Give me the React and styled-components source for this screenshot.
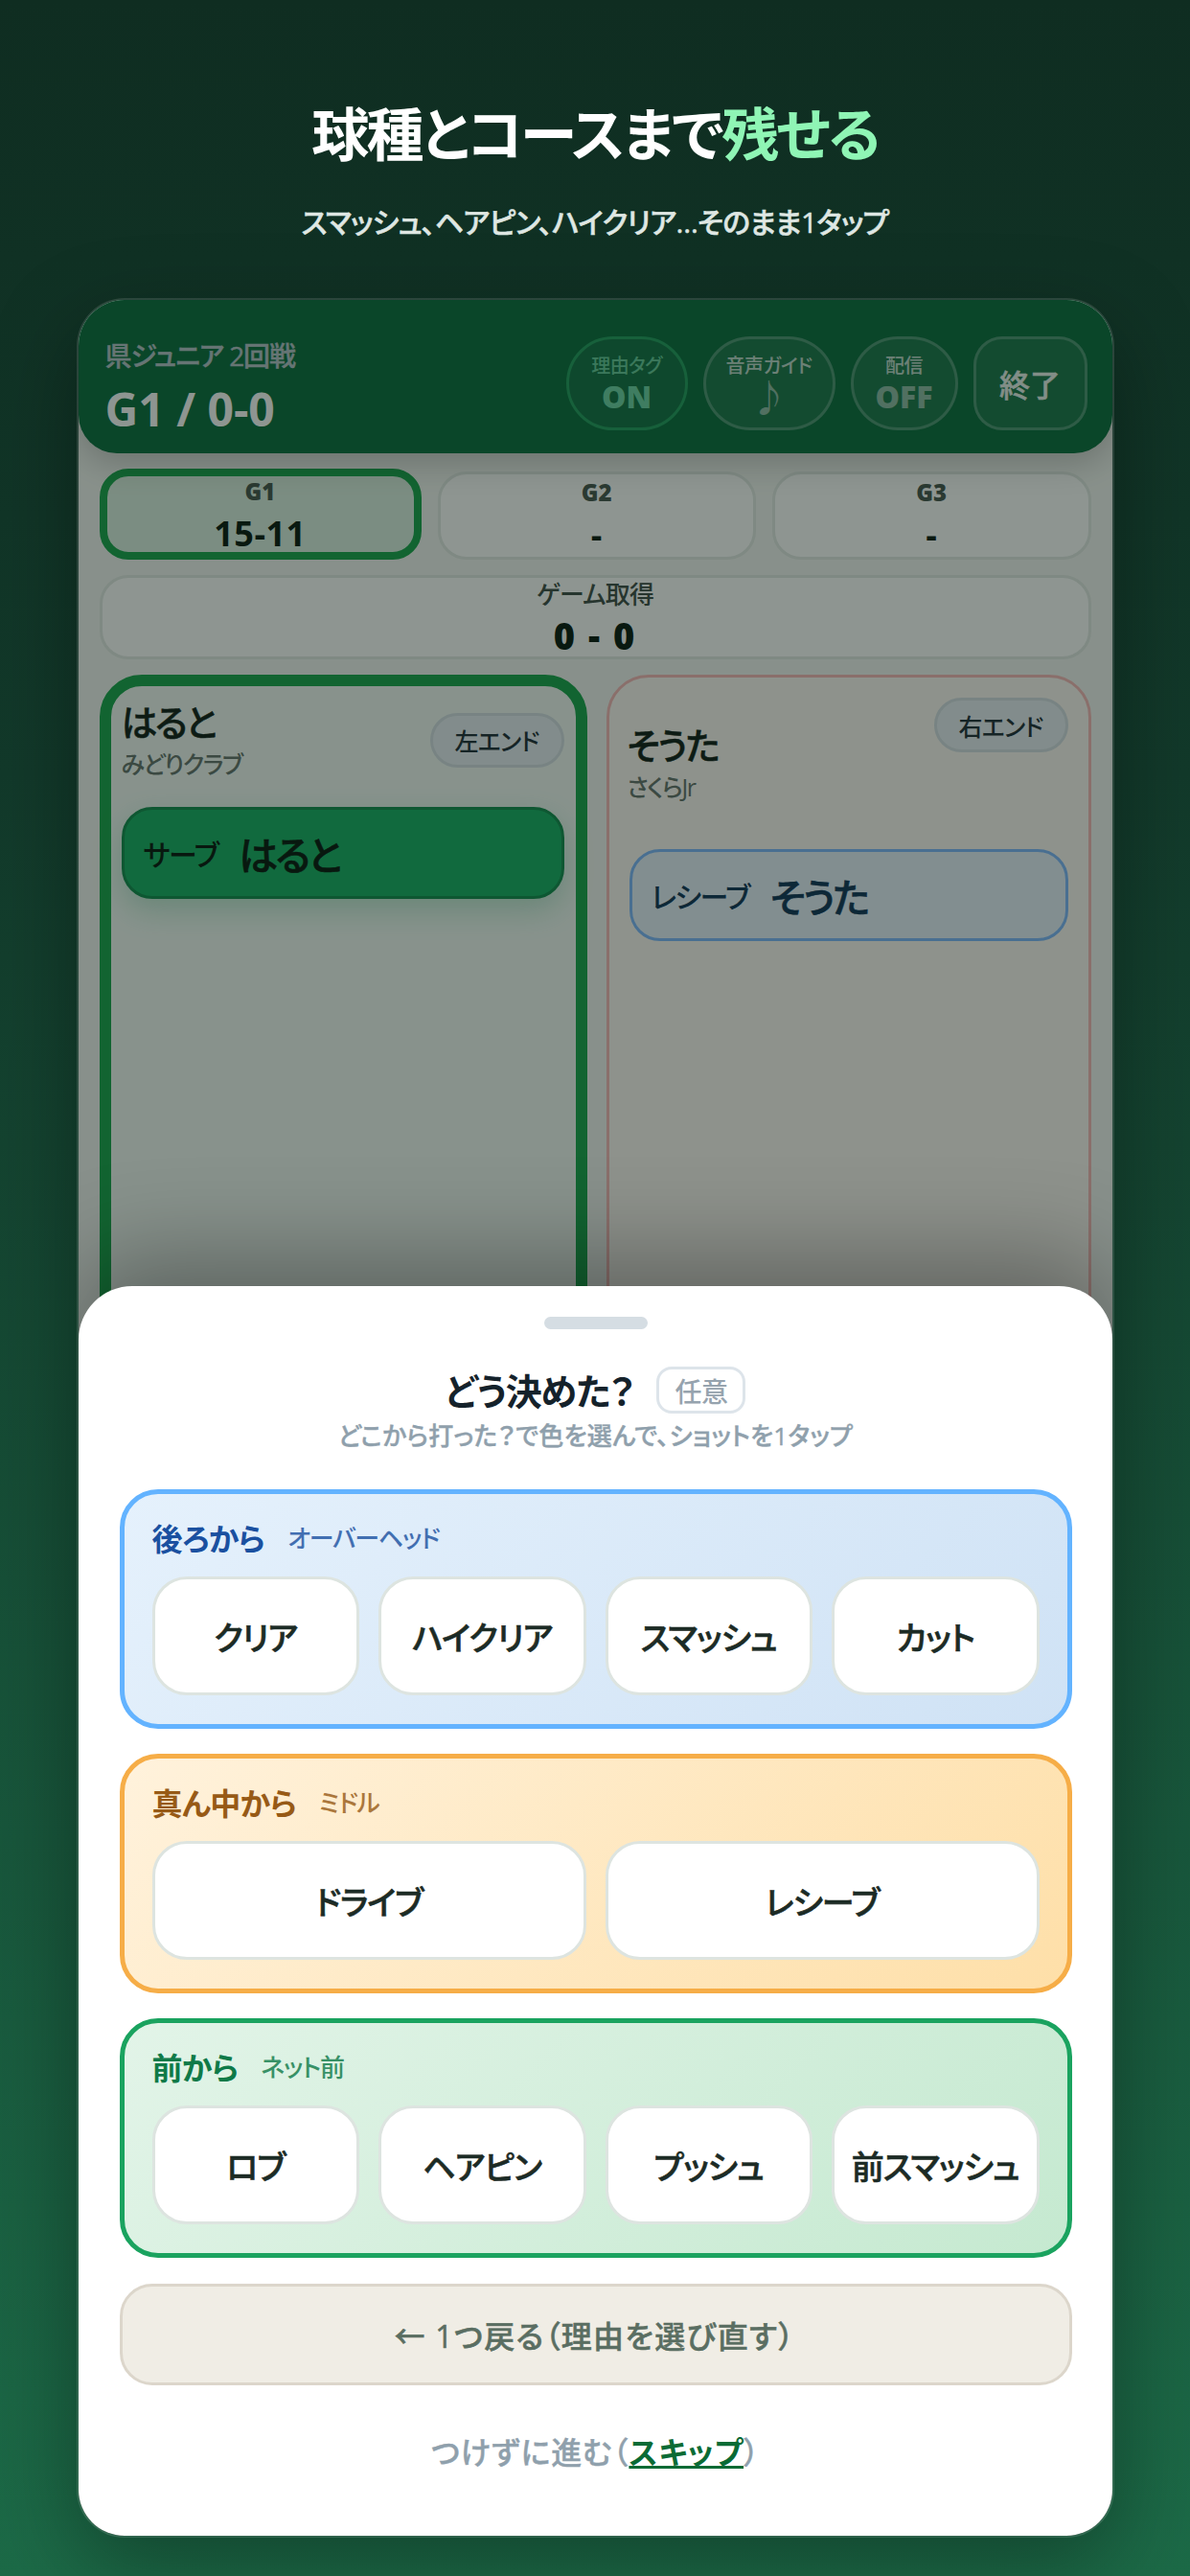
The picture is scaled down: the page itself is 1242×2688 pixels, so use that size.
import React from "react";
import styled, { createGlobalStyle } from "styled-components";

const FONT = `"Open Sans", "Noto Sans CJK JP", "Noto Sans", sans-serif`;

const Global = createGlobalStyle`
  html, body { margin: 0; padding: 0; }
  body { font-family: ${FONT}; font-feature-settings: "palt"; }
  * { box-sizing: border-box; }
`;
const Page = styled.div`
  width: 1242px; height: 2688px; overflow: hidden;
  background: linear-gradient(180deg, #0f2d21 0%, #12392a 30%, #1c6a47 100%);
  display: flex; flex-direction: column; align-items: center; padding-top: 98px;
`;
const Headline = styled.h1`
  margin: 0; font-size: 60px; line-height: 84px; font-weight: 700; color: #fff; letter-spacing: -2.6px;
`;
const Accent = styled.span` color: #8ff5b5; `;
const Lead = styled.p`
  margin: 28px 0 0; font-size: 30px; line-height: 44px; font-weight: 500; color: #dfe7e3; letter-spacing: -.8px;
  -webkit-text-stroke: 0.5px #dfe7e3;
`;
const Phone = styled.div`
  position: relative; margin-top: 59px; width: 1079px; height: 2333px; flex: none;
  border-radius: 48px; overflow: hidden; background: #f4f6f3;
  box-shadow: 0 0 0 2px rgba(255,255,255,.12), 0 30px 90px rgba(0,0,0,.35);
`;
const Top = styled.header`
  position: relative; height: 160px; padding: 14px 26px 0 28px; display: flex; align-items: center; justify-content: space-between;
  background: #076a3c; border-radius: 0 0 40px 40px; color: #fff;
  box-shadow: 0 10px 34px rgba(0,0,0,.22);
`;
const Match = styled.div` padding-top: 6px; `;
const Tourney = styled.div` font-size: 28px; line-height: 40px; font-weight: 500; color: #b4c2c8; letter-spacing: -1.1px; -webkit-text-stroke: .4px #b4c2c8; `;
const Score = styled.div` margin-top: 8px; font-size: 48px; line-height: 56px; font-weight: 700; `;
const Controls = styled.div` display: flex; align-items: center; gap: 16px; `;
const Ctl = styled.div`
  height: 98px; width: ${p => p.$w}px; border-radius: ${p => p.$square ? 30 : 49}px;
  display: flex; flex-direction: column; align-items: center; justify-content: center;
  border: 3px solid ${p => p.$on ? "#1f9c5d" : "rgba(255,255,255,.22)"};
  background: rgba(255,255,255,${p => p.$on ? .03 : .07});
  color: ${p => p.$on ? "#83ecbd" : "#fff"};
`;
const CtlLabel = styled.span` font-size: 20px; line-height: 28px; font-weight: 500; opacity: .72; letter-spacing: -.5px; `;
const CtlValue = styled.span` font-size: 32px; line-height: 36px; font-weight: 800; opacity: ${p => p.$dim ? .5 : .8}; `;
const CtlNote = styled.span` font-size: 38px; line-height: 36px; font-weight: 400; opacity: .5; `;
const CtlEnd = styled.span` font-size: 32px; font-weight: 500; opacity: .9; -webkit-text-stroke: .5px #fff; `;
const Body = styled.main` padding: 16px 22px 0 22px; display: flex; flex-direction: column; `;
const Games = styled.div` display: grid; grid-template-columns: 336px 1fr 1fr; gap: 17px; align-items: end; `;
const Game = styled.div`
  height: ${p => p.$active ? 95 : 92}px; border-radius: 30px; padding-top: 2px;
  border: ${p => p.$active ? "8px solid #16a34a" : "3px solid #e2e8e4"};
  background: ${p => p.$active ? "#dcf0e2" : "#fff"};
  display: flex; flex-direction: column; align-items: center; justify-content: center;
`;
const GameLabel = styled.div` font-size: 24px; line-height: 30px; font-weight: 800; color: #44534c; `;
const GameScore = styled.div` font-size: 36px; line-height: 42px; font-weight: 700; margin-top: 8px; letter-spacing: .5px; color: #05150d; `;
const Tally = styled.div`
  margin-top: 16px; height: 88px; border-radius: 30px; border: 3px solid #e2e8e4; background: #fff;
  display: flex; flex-direction: column; align-items: center; justify-content: center;
`;
const TallyLabel = styled.div` font-size: 26px; line-height: 34px; font-weight: 500; color: #3c4a44; letter-spacing: -.8px; `;
const TallyScore = styled.div` font-size: 38px; line-height: 46px; font-weight: 800; margin-top: 3px; color: #05150d; letter-spacing: 2px; `;
const Players = styled.div` margin-top: 16px; display: grid; grid-template-columns: 509px 506px; gap: 20px; `;
const Player = styled.section`
  height: 1500px; border-radius: 44px;
  border: ${p => p.$active ? "12px solid #16a34a" : "3px solid #f7b8b8"};
  padding: ${p => p.$active ? "12px 12px 12px 11px" : "21px 21px 21px 19px"}; background: ${p => p.$active ? "#f3faf6" : "#fff9f5"};
`;
const PlayerTop = styled.div`
  display: flex; justify-content: space-between; align-items: ${p => p.$active ? "center" : "flex-start"};
`;
const Who = styled.div` padding-top: ${p => p.$active ? 0 : 24}px; `;
const Name = styled.div` font-size: 38px; line-height: 50px; font-weight: 500; color: #0c1a14; letter-spacing: -2.6px; -webkit-text-stroke: .5px #0c1a14; `;
const Club = styled.div` font-size: 25px; line-height: 38px; font-weight: 500; color: #62706a; letter-spacing: -1.4px; `;
const EndPill = styled.div`
  width: 140px; height: 57px; border-radius: 29px; border: 3px solid #d5dee4; background: #e9eff5;
  display: flex; align-items: center; justify-content: center; font-size: 25px; font-weight: 500; color: #1c2b35; letter-spacing: -.8px;
`;
const Role = styled.div`
  margin: ${p => p.$active ? "26px 0 0" : "46px 0 0 2px"}; height: 96px; border-radius: 32px; padding: 0 20px;
  display: flex; align-items: center; gap: 22px;
  background: ${p => p.$active ? "#14af63" : "#e8f1fd"};
  border: 3px solid ${p => p.$active ? "#0f8a4c" : "#7db8ff"};
  color: ${p => p.$active ? "#03130b" : "#0d3256"};
  box-shadow: ${p => p.$active ? "0 12px 30px rgba(21,163,94,.25)" : "none"};
`;
const RoleTag = styled.span` font-size: 30px; font-weight: 500; letter-spacing: -1.5px; `;
const RoleName = styled.span` font-size: 41px; font-weight: 500; letter-spacing: -3px; -webkit-text-stroke: .6px currentColor; `;
const Scrim = styled.div` position: absolute; inset: 0; background: rgba(15,30,22,.47); `;
const Sheet = styled.div`
  position: absolute; left: 0; right: 0; bottom: 0; height: 1304px;
  background: #fff; border-radius: 56px 56px 48px 48px;
  box-shadow: 0 -30px 100px rgba(0,0,0,.32);
  padding: 32px 42px 0 43px; display: flex; flex-direction: column;
`;
const Handle = styled.div` align-self: center; width: 108px; height: 13px; border-radius: 7px; background: #d5dde3; `;
const TitleRow = styled.div` margin-top: 39px; height: 49px; display: flex; justify-content: center; align-items: center; gap: 24px; `;
const Title = styled.h2` margin: 0; font-size: 38px; line-height: 50px; font-weight: 700; color: #15222b; letter-spacing: -1.2px; `;
const Badge = styled.span`
  width: 93px; height: 49px; border-radius: 16px; border: 3px solid #dde4ea;
  display: flex; align-items: center; justify-content: center; font-size: 28px; font-weight: 500; color: #96a3ae; letter-spacing: -.5px;
`;
const Hint = styled.p` margin: 3px 0 0; height: 40px; text-align: center; font-size: 26px; line-height: 40px; font-weight: 500; color: #8fa0ac; letter-spacing: .2px; -webkit-text-stroke: .4px #8fa0ac; `;
const Group = styled.section`
  margin-top: ${p => p.$first ? 36 : 26}px; height: 250px; border-radius: 40px;
  border: 5px solid ${p => p.$border}; background: ${p => p.$bg};
  padding: 23px 29px 0;
`;
const GroupHead = styled.div` height: 44px; display: flex; align-items: center; gap: 24px; `;
const GroupName = styled.span` font-size: 32px; font-weight: 700; color: ${p => p.$c}; letter-spacing: -.7px; `;
const GroupSub = styled.span` font-size: 26px; font-weight: 500; color: ${p => p.$c}; opacity: .8; letter-spacing: -1.2px; `;
const Shots = styled.div` margin-top: 19px; display: grid; grid-template-columns: repeat(${p => p.$n}, 1fr); gap: 20px; `;
const Shot = styled.button`
  height: 124px; border-radius: 36px; border: 3px solid #dde4e0; background: #fff; padding: 0;
  font: 500 34px ${FONT}; font-feature-settings: "palt"; color: #1c2b25; letter-spacing: -1px;
  -webkit-text-stroke: .6px #1c2b25;
`;
const Back = styled.button`
  margin-top: 27px; height: 106px; border-radius: 34px; border: 3px solid #dcd6cb; background: #f0ede5;
  font: 500 32px ${FONT}; font-feature-settings: "palt"; color: #5a6e62; letter-spacing: 1.3px; padding-right: 8px;
  -webkit-text-stroke: .5px #5a6e62;
`;
const SkipLine = styled.p` margin: 47px 0 0; text-align: center; font-size: 32px; line-height: 46px; font-weight: 500; color: #8fa0ac; letter-spacing: .9px; -webkit-text-stroke: .4px #8fa0ac; `;
const SkipLink = styled.a` color: #0a6b35; text-decoration: underline; font-weight: 700; -webkit-text-stroke: 0; `;

const groups = [
  { name: "後ろから", sub: "オーバーヘッド", c: "#1a50a0", border: "#63b3ff", bg: "linear-gradient(135deg,#e5f1fc,#cfe2f5)", shots: ["クリア","ハイクリア","スマッシュ","カット"] },
  { name: "真ん中から", sub: "ミドル", c: "#975a16", border: "#f6ad47", bg: "linear-gradient(135deg,#fff2dc,#fedfa8)", shots: ["ドライブ","レシーブ"] },
  { name: "前から", sub: "ネット前", c: "#0f7a48", border: "#1aa35f", bg: "linear-gradient(135deg,#e2f4e8,#c5e9d0)", shots: ["ロブ","ヘアピン","プッシュ","前スマッシュ"] },
];

export default function App() {
  return (
    <Page>
      <Global />
      <Headline>球種とコースまで<Accent>残せる</Accent></Headline>
      <Lead>スマッシュ、ヘアピン、ハイクリア…そのまま1タップ</Lead>
      <Phone>
        <Top>
          <Match>
            <Tourney>県ジュニア 2回戦</Tourney>
            <Score>G1 / 0-0</Score>
          </Match>
          <Controls>
            <Ctl $on $w={127}><CtlLabel>理由タグ</CtlLabel><CtlValue>ON</CtlValue></Ctl>
            <Ctl $w={138}><CtlLabel>音声ガイド</CtlLabel><CtlNote>♪</CtlNote></Ctl>
            <Ctl $w={112}><CtlLabel>配信</CtlLabel><CtlValue $dim>OFF</CtlValue></Ctl>
            <Ctl $square $w={119}><CtlEnd>終了</CtlEnd></Ctl>
          </Controls>
        </Top>
        <Body>
          <Games>
            <Game $active><GameLabel>G1</GameLabel><GameScore>15-11</GameScore></Game>
            <Game><GameLabel>G2</GameLabel><GameScore>-</GameScore></Game>
            <Game><GameLabel>G3</GameLabel><GameScore>-</GameScore></Game>
          </Games>
          <Tally><TallyLabel>ゲーム取得</TallyLabel><TallyScore>0 - 0</TallyScore></Tally>
          <Players>
            <Player $active>
              <PlayerTop $active>
                <Who $active><Name>はると</Name><Club>みどりクラブ</Club></Who>
                <EndPill>左エンド</EndPill>
              </PlayerTop>
              <Role $active><RoleTag>サーブ</RoleTag><RoleName>はると</RoleName></Role>
            </Player>
            <Player>
              <PlayerTop>
                <Who><Name>そうた</Name><Club>さくらJr</Club></Who>
                <EndPill>右エンド</EndPill>
              </PlayerTop>
              <Role><RoleTag>レシーブ</RoleTag><RoleName>そうた</RoleName></Role>
            </Player>
          </Players>
        </Body>
        <Scrim />
        <Sheet>
          <Handle />
          <TitleRow><Title>どう決めた？</Title><Badge>任意</Badge></TitleRow>
          <Hint>どこから打った？で色を選んで、ショットを1タップ</Hint>
          {groups.map((g, i) => (
            <Group key={g.name} $first={i === 0} $border={g.border} $bg={g.bg}>
              <GroupHead><GroupName $c={g.c}>{g.name}</GroupName><GroupSub $c={g.c}>{g.sub}</GroupSub></GroupHead>
              <Shots $n={g.shots.length}>{g.shots.map(s => <Shot key={s}>{s}</Shot>)}</Shots>
            </Group>
          ))}
          <Back>← 1つ戻る（理由を選び直す）</Back>
          <SkipLine>つけずに進む（<SkipLink>スキップ</SkipLink>）</SkipLine>
        </Sheet>
      </Phone>
    </Page>
  );
}
